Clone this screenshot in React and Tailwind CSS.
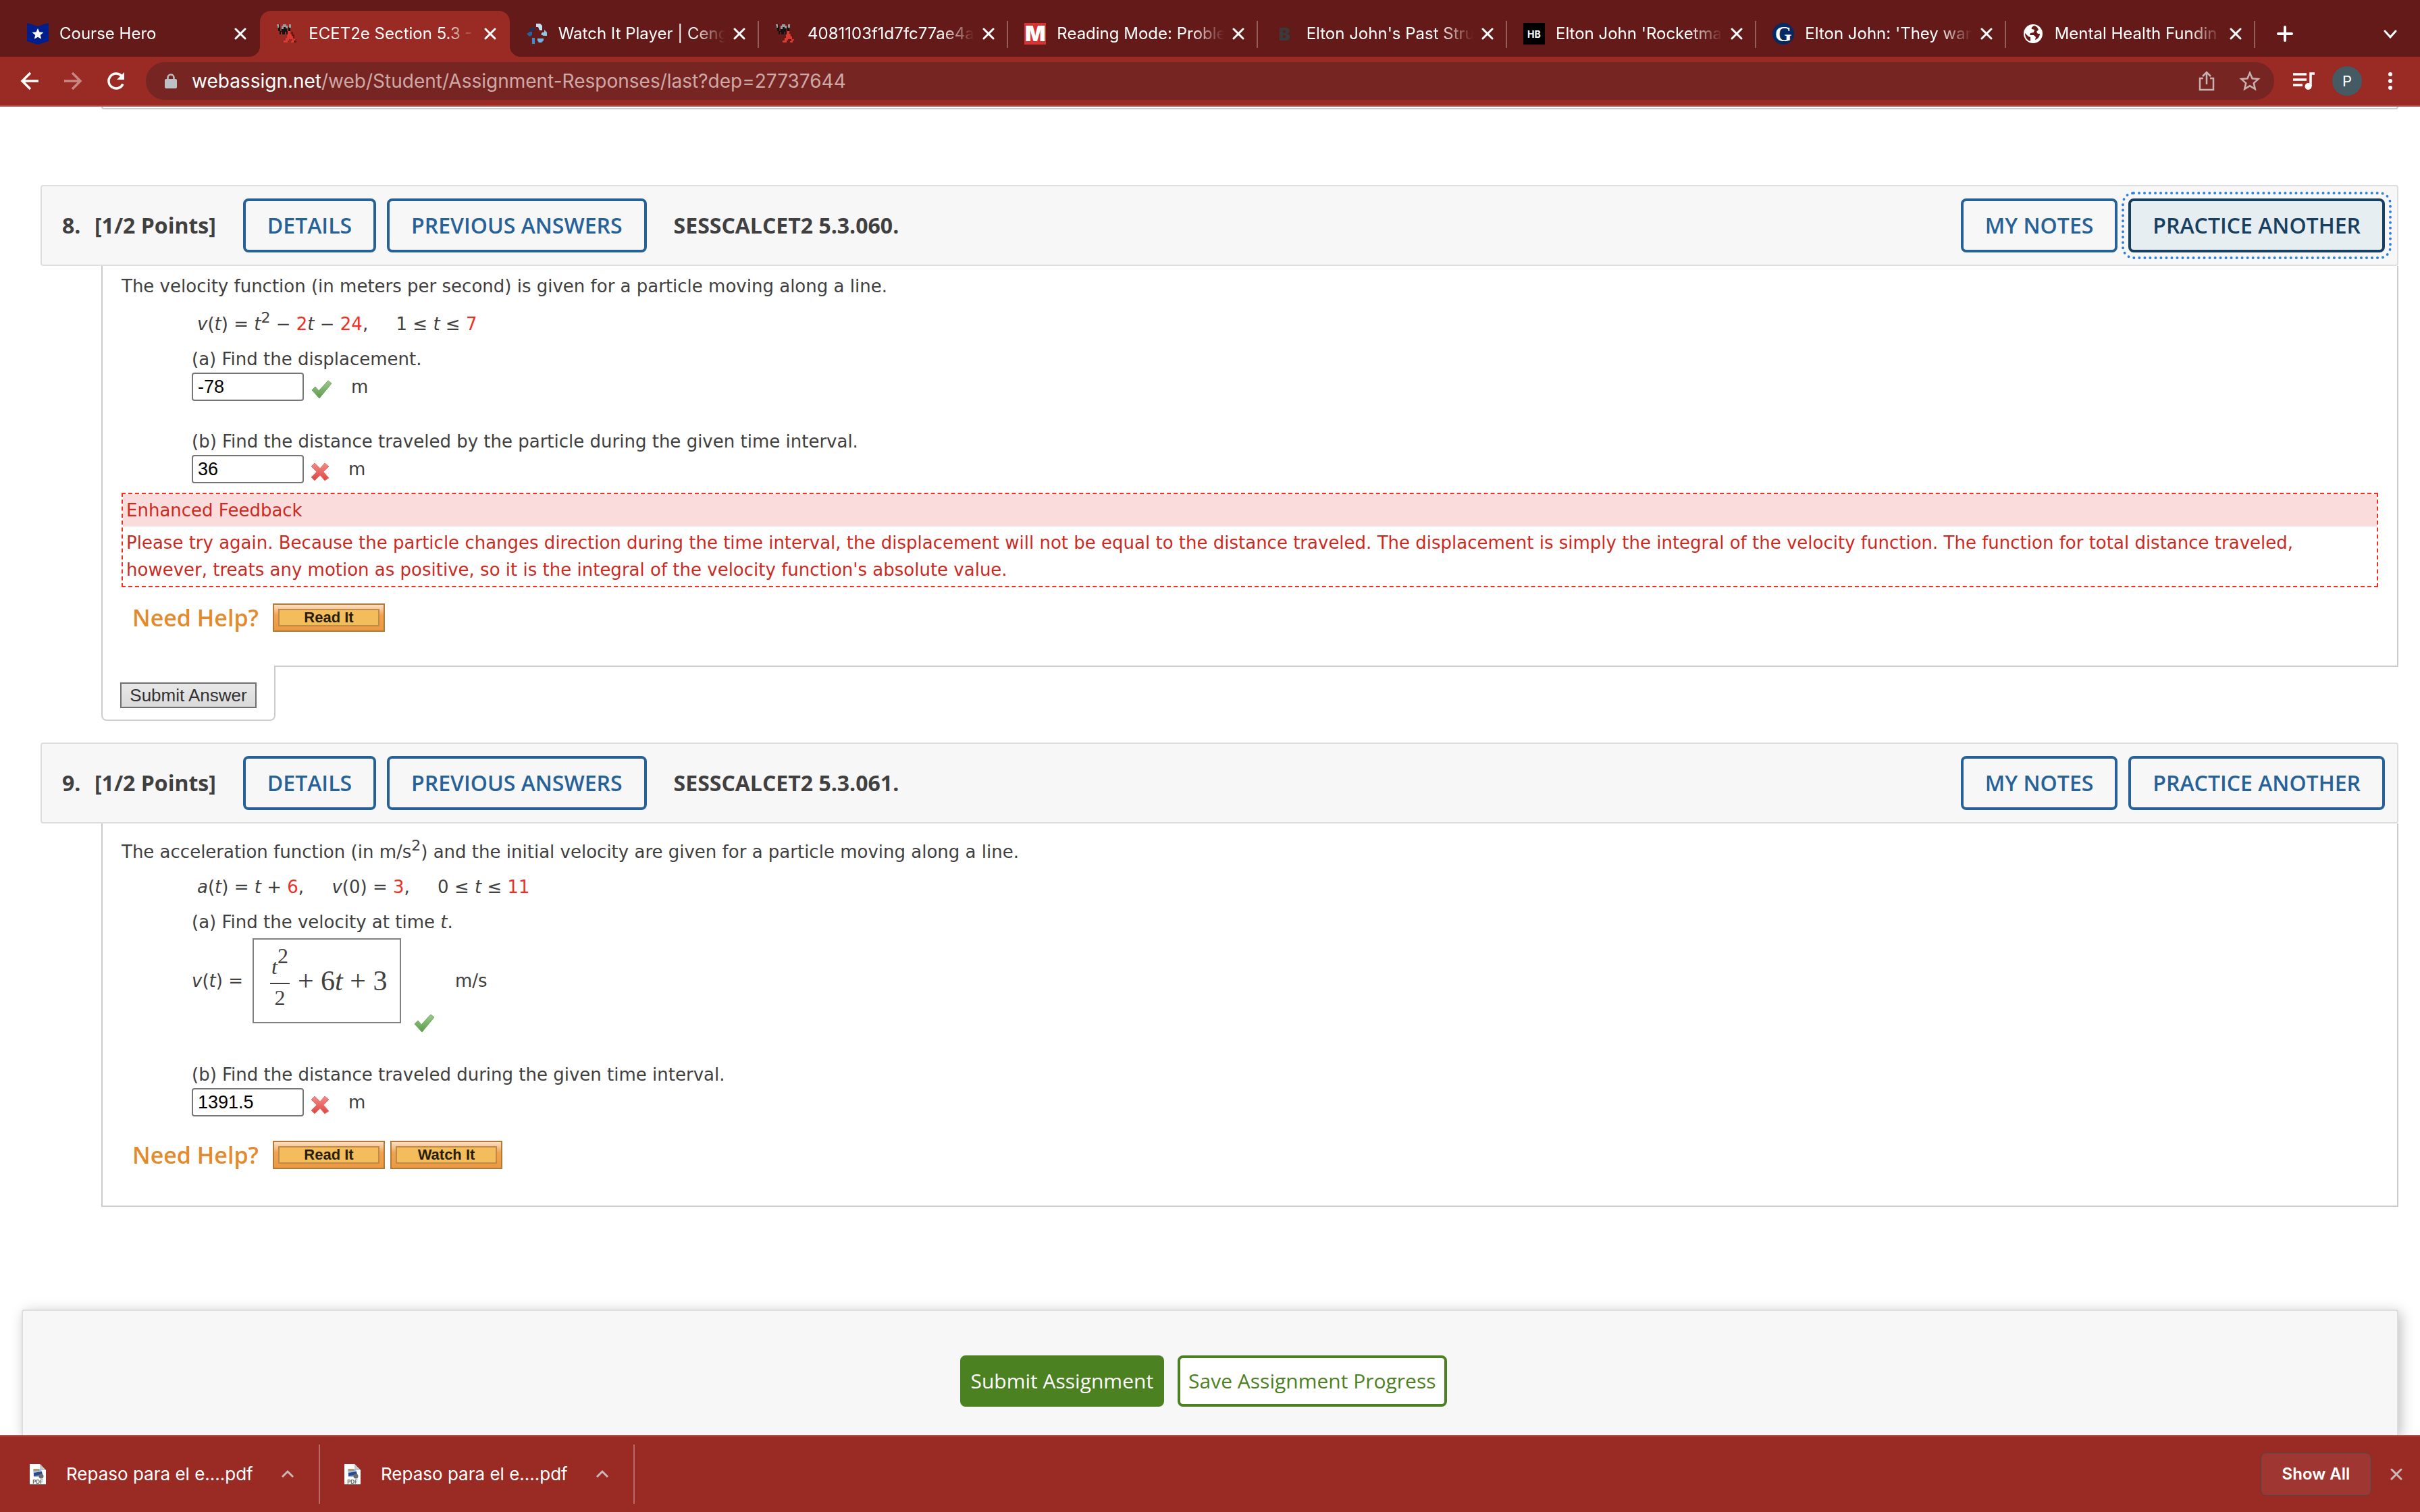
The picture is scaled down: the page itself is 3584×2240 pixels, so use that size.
import { useState } from 'react';

const CloseIcon = () => (
  <svg className="w-[18px] h-[18px]" viewBox="0 0 18 18" fill="none" stroke="currentColor" strokeWidth="3" strokeLinecap="round">
    <path d="M2 2l14 14M16 2L2 16" />
  </svg>
);

const CourseHeroIcon = () => (
  <svg className="w-8 h-8" viewBox="0 0 32 32">
    <path d="M0 0l16 5 16-5v27l-16 5-16-5z" fill="#001f8c" />
    <path d="M16 8l2.4 5.500 6 .5-4.600 4 1.400 5.800L16 20.700l-5.200 3.100 1.400-5.800-4.600-4 6-.5z" fill="#fff" />
  </svg>
);

const WebAssignIcon = () => (
  <svg className="w-8 h-8" viewBox="0 0 32 32">
    <path d="M2 2h3v4h1v6h2V8h2V2h4v6h2v4h2V6h1V2h3v5h-1v5h-2v5h-4v-4h-2v4H9v-4H7v4H5v-5H3V6H2z" fill="#141414" />
    <path d="M1 2h3v5H2V4H1zM10 2h5v2h2v4h-3V6h-3v3H8V4h2zM19 2h3v5h-3z" fill="#9a9a9a" />
    <path d="M17 12h4v4h2v4h2v4h3v2h2v3h-8v-2h2v-3h-5v2h-2v3h-6v-3h3v-4h2v-5h1z" fill="#d93a32" />
    <path d="M22 13h3v4h2v5h-2v-3h-2zM26 26h4v3h-4z" fill="#6e1512" />
  </svg>
);

const CengageIcon = () => (
  <svg className="w-8 h-8" viewBox="0 0 32 32">
    <path d="M15 1h6l3 3v7h-4l-2-5h-3z" fill="#c3e1f1" />
    <path d="M27 10l4 4v5h-5l-4-2 2-3h3z" fill="#8cc8e8" />
    <path d="M17 23h9v3l-3 3h-4l-2-3z" fill="#6ab4df" />
    <path d="M9 22h4v9H9z" fill="#3b8fce" />
    <path d="M1 16l5-3h3v5l-4 2z" fill="#2463a5" />
    <path d="M5 9l3-2h5v4H5z" fill="#0f3763" />
  </svg>
);

const MIcon = () => (
  <span className="w-8 h-8 flex items-center justify-center bg-[#d63431] text-[32px] leading-8 font-black text-white">M</span>
);

const BIcon = () => (
  <span className="w-8 h-8 flex items-center justify-center text-[26px] font-black text-[#3a3a3c]">B</span>
);

const HBIcon = () => (
  <span className="w-8 h-8 flex items-center justify-center bg-black text-[14px] font-bold text-white">HB</span>
);

const GIcon = () => (
  <span className="w-8 h-8 flex items-center justify-center rounded-full bg-[#052962] font-['Liberation_Serif',serif] text-[32px] leading-8 font-bold text-white">G</span>
);

const GlobeIcon = () => (
  <svg className="w-8 h-8" viewBox="0 0 32 32">
    <circle cx="16" cy="16" r="14" fill="#fff" />
    <path d="M18 4c-3 1-5 3-4 5l4 1-1 4-5 1-1 3h6l3 3-1 4c4-1 7-5 7-9h-3l-2-3 3-3c-1-3-3-5-6-6zM4 15l5 5 3 1v6C7 26 4 21 4 15z" fill="#641a18" />
  </svg>
);

const tabs = [
  { title: 'Course Hero', icon: <CourseHeroIcon /> },
  { title: 'ECET2e Section 5.3 -', icon: <WebAssignIcon />, active: true },
  { title: 'Watch It Player | Ceng', icon: <CengageIcon /> },
  { title: '4081103f1d7fc77ae4a', icon: <WebAssignIcon /> },
  { title: 'Reading Mode: Proble', icon: <MIcon /> },
  { title: "Elton John's Past Stru", icon: <BIcon /> },
  { title: "Elton John 'Rocketma", icon: <HBIcon /> },
  { title: "Elton John: 'They wan", icon: <GIcon /> },
  { title: 'Mental Health Fundin', icon: <GlobeIcon /> },
];

const Tab = ({ tab, divider }) => (
  <div className={`relative flex flex-1 min-w-0 items-center pl-6 pr-5 ${tab.active ? 'bg-[#992a24] rounded-t-2xl' : ''}`}>
    {tab.active && (
      <>
        <span className="absolute bottom-0 -left-4 w-4 h-4 bg-[radial-gradient(circle_at_0_0,transparent_16px,#992a24_16px)]" />
        <span className="absolute bottom-0 -right-4 w-4 h-4 bg-[radial-gradient(circle_at_100%_0,transparent_16px,#992a24_16px)]" />
      </>
    )}
    <span className="shrink-0">{tab.icon}</span>
    <span className="flex-1 min-w-0 ml-4 mr-3 overflow-hidden whitespace-nowrap text-[24px] leading-8 [mask-image:linear-gradient(to_right,black_80%,transparent)]">
      {tab.title}
    </span>
    <button aria-label={`Close ${tab.title}`} className="shrink-0"><CloseIcon /></button>
    {divider && <span className="absolute right-0 top-[15px] h-10 w-[2px] bg-[#935e5c]" />}
  </div>
);

const TabStrip = () => (
  <div className="flex h-[84px] pt-4 pl-4 bg-[#641a18] text-white">
    <div className="flex flex-1 min-w-0">
      {tabs.map((tab, i) => (
        <Tab key={tab.title} tab={tab} divider={i > 1} />
      ))}
    </div>
    <div className="flex w-[244px] items-center justify-between pl-8 pr-[34px]">
      <button aria-label="New tab">
        <svg className="w-6 h-6" viewBox="0 0 24 24" fill="none" stroke="currentColor" strokeWidth="4" strokeLinecap="round">
          <path d="M12 2v20M2 12h20" />
        </svg>
      </button>
      <button aria-label="Search tabs">
        <svg className="w-5 h-5" viewBox="0 0 20 20" fill="none" stroke="currentColor" strokeWidth="3" strokeLinecap="round">
          <path d="M2 6l8 9 8-9" />
        </svg>
      </button>
    </div>
  </div>
);

const Toolbar = () => (
  <div className="flex h-[74px] items-center border-b-2 border-[#b0504b] bg-[#992a24] pl-7 pr-7 text-white">
    <button aria-label="Back">
      <svg className="w-8 h-8" viewBox="0 0 32 32" fill="none" stroke="currentColor" strokeWidth="3.500">
        <path d="M29 16H5M17 4L5 16l12 12" />
      </svg>
    </button>
    <button aria-label="Forward" className="ml-8 text-[#c98884]">
      <svg className="w-8 h-8" viewBox="0 0 32 32" fill="none" stroke="currentColor" strokeWidth="3.500">
        <path d="M3 16h24M15 4l12 12-12 12" />
      </svg>
    </button>
    <button aria-label="Reload" className="ml-8">
      <svg className="w-8 h-8" viewBox="0 0 32 32" fill="none" stroke="currentColor" strokeWidth="3.500">
        <path d="M26 20.500A11 11 0 1 1 24 8.500" />
        <path d="M28 3v11H17z" fill="currentColor" stroke="none" />
      </svg>
    </button>
    <div className="flex flex-1 h-14 items-center ml-7 pl-7 pr-5 rounded-full bg-[#762523]">
      <svg className="w-[18px] h-[22px] text-[#bdc1c6]" viewBox="0 0 18 22">
        <rect x="0" y="8" width="18" height="14" rx="2" fill="currentColor" />
        <path d="M4.500 9V6a4.500 4.500 0 0 1 9 0v3" fill="none" stroke="currentColor" strokeWidth="2.500" />
      </svg>
      <span className="flex-1 ml-[22px] text-[28px] leading-8 text-[#cfa9a7]">
        <span className="text-white">webassign.net</span>/web/Student/Assignment-Responses/last?dep=27737644
      </span>
      <button aria-label="Share" className="text-[#c8b3b2]">
        <svg className="w-8 h-8" viewBox="0 0 32 32" fill="none" stroke="currentColor" strokeWidth="2.500">
          <path d="M11 12H6v17h20V12h-5M16 21V3M10 9l6-6 6 6" />
        </svg>
      </button>
      <button aria-label="Bookmark" className="ml-8 text-[#c8b3b2]">
        <svg className="w-8 h-8" viewBox="0 0 32 32" fill="none" stroke="currentColor" strokeWidth="2.500">
          <path d="M16 4l3.600 8.300 9 .8-6.800 6 2 8.800L16 23.200l-7.800 4.700 2-8.800-6.800-6 9-.8z" />
        </svg>
      </button>
    </div>
    <button aria-label="Media controls" className="ml-7">
      <svg className="w-8 h-8" viewBox="0 0 32 32" fill="none" stroke="currentColor" strokeWidth="3.500">
        <path d="M0 6h20M0 14h20M0 22h14M26 24V5h6" />
        <circle cx="22.500" cy="24" r="5" fill="currentColor" stroke="none" />
      </svg>
    </button>
    <button aria-label="Profile" className="ml-[26px] w-11 h-11 rounded-full bg-[#465a64] text-[22px] leading-8">P</button>
    <button aria-label="Menu" className="ml-[26px]">
      <svg className="w-8 h-8" viewBox="0 0 32 32" fill="currentColor">
        <circle cx="16" cy="6" r="3" />
        <circle cx="16" cy="16" r="3" />
        <circle cx="16" cy="26" r="3" />
      </svg>
    </button>
  </div>
);

const CheckMark = () => (
  <svg className="w-8 h-7" viewBox="0 0 32 28" role="img" aria-label="Correct">
    <defs>
      <linearGradient id="tick" x1="0" y1="0" x2="0" y2="1">
        <stop offset="0" stopColor="#9ccb8b" />
        <stop offset="1" stopColor="#5a9a4b" />
      </linearGradient>
    </defs>
    <path d="M2 15l5-5 5 6L26 1l5 4-18 22z" fill="url(#tick)" stroke="#6fa662" strokeWidth="1" strokeLinejoin="round" />
  </svg>
);

const CrossMark = () => (
  <svg className="w-7 h-7" viewBox="0 0 28 28" role="img" aria-label="Incorrect">
    <defs>
      <linearGradient id="cross" x1="0" y1="0" x2="0" y2="1">
        <stop offset="0" stopColor="#f08d8a" />
        <stop offset="1" stopColor="#e0443f" />
      </linearGradient>
    </defs>
    <path d="M6 1l8 8 7-8 6 5-8 8 8 9-6 4-7-8-8 8-5-5 8-8-8-8z" fill="url(#cross)" stroke="#e87a76" strokeWidth="1" strokeLinejoin="round" />
  </svg>
);

const HeaderButton = ({ children, focused }) => (
  <button
    className={
      focused
        ? 'h-20 px-8 rounded-lg border-4 border-[#173f5f] bg-[#e7eef2] text-[#173f5f] outline-4 outline-dotted outline-[#2f7fde] outline-offset-[6px]'
        : 'h-20 px-8 rounded-lg border-4 border-[#266297] text-[#266297]'
    }
  >
    {children}
  </button>
);

const QuestionHeader = ({ number, code, focused }) => (
  <div className="flex h-[120px] items-center gap-4 rounded border-2 border-[#dedede] bg-[#f7f7f7] pl-[30px] pr-[18px] font-['Open_Sans',sans-serif] text-[32px] leading-10 font-semibold">
    <h2 className="flex mr-6 font-bold">
      <span className="w-12">{number}.</span>
      <span>[1/2 Points]</span>
    </h2>
    <HeaderButton>DETAILS</HeaderButton>
    <HeaderButton>PREVIOUS ANSWERS</HeaderButton>
    <span className="flex-1 ml-6 font-bold">{code}</span>
    <HeaderButton>MY NOTES</HeaderButton>
    <HeaderButton focused={focused}>PRACTICE ANOTHER</HeaderButton>
  </div>
);

const AnswerRow = ({ id, label, value, correct }) => {
  const [answer, setAnswer] = useState(value);

  return (
    <div>
      <label htmlFor={id} className="block">{label}</label>
      <div className="flex h-[42px] items-center">
        <input
          id={id}
          value={answer}
          onChange={(e) => setAnswer(e.target.value)}
          className="w-[166px] h-[42px] px-[7px] rounded border-2 border-[#767676] bg-white font-['Liberation_Sans',sans-serif] text-[27px] text-black"
        />
        <span className="ml-[10px] mt-2">{correct ? <CheckMark /> : <CrossMark />}</span>
        <span className="ml-7">m</span>
      </div>
    </div>
  );
};

const HelpButton = ({ children }) => (
  <button className="w-[166px] h-[42px] p-[6px] border-2 border-[#b07a3a] bg-linear-to-b from-[#fbe0c4] via-[#f0a350] via-40% to-[#ec9a42]">
    <span className="flex h-full items-center justify-center border-2 border-[#c08a48] bg-[#f3bd5c] font-['Liberation_Sans',sans-serif] text-[22px] leading-6 font-bold text-[#2a1d08]">
      {children}
    </span>
  </button>
);

const NeedHelp = ({ items }) => (
  <div className="flex items-center gap-2 pl-4">
    <span className="w-[200px] font-['Open_Sans',sans-serif] text-[34px] leading-10 font-semibold text-[#e38b2c]">Need Help?</span>
    {items.map((item) => (
      <HelpButton key={item}>{item}</HelpButton>
    ))}
  </div>
);

const Red = ({ children }) => <span className="text-[#ee3124]">{children}</span>;

const QuestionEight = () => (
  <section>
    <QuestionHeader number={8} code="SESSCALCET2 5.3.060." focused />
    <div className="ml-[90px]">
      <div className="h-[592px] border-x-2 border-[#ccc] px-7 pt-[10px]">
        <p>The velocity function (in meters per second) is given for a particle moving along a line.</p>
        <p className="mt-4 pl-28">
          <i>v</i>(<i>t</i>) = <i>t</i><sup className="text-[22px]">2</sup> − <Red>2</Red><i>t</i> − <Red>24</Red>,&nbsp;&nbsp;&nbsp;&nbsp; 1 ≤ <i>t</i> ≤ <Red>7</Red>
        </p>
        <div className="flex flex-col gap-10 mt-3 pl-[104px]">
          <AnswerRow id="q8a" label="(a) Find the displacement." value="-78" correct />
          <AnswerRow id="q8b" label="(b) Find the distance traveled by the particle during the given time interval." value="36" />
        </div>
        <div className="mt-[14px] border-2 border-dashed border-[#ee3124] text-[#cc2a1f]">
          <h3 className="h-12 pl-[5px] pt-1 bg-[#fadcdc]">Enhanced Feedback</h3>
          <p className="pl-[5px] pt-1 pb-1">
            Please try again. Because the particle changes direction during the time interval, the displacement will not be equal to the distance traveled. The displacement is simply the integral of the velocity function. The function for total distance traveled, however, treats any motion as positive, so it is the integral of the velocity function's absolute value.
          </p>
        </div>
        <div className="mt-6">
          <NeedHelp items={['Read It']} />
        </div>
      </div>
      <div className="flex h-[82px]">
        <div className="w-[258px] pl-[26px] pt-6 border-x-2 border-b-2 border-[#ccc] rounded-b-lg">
          <button className="h-[38px] w-[202px] border-2 border-[#6f6f6f] bg-linear-to-b from-[#e8e8e8] to-[#dadada] font-['Liberation_Sans',sans-serif] text-[26px] leading-8 text-[#333]">
            Submit Answer
          </button>
        </div>
        <div className="flex-1 border-t-2 border-r-2 border-[#ccc] h-[2px] rounded-tr" />
      </div>
    </div>
  </section>
);

const QuestionNine = () => (
  <section className="mt-8">
    <QuestionHeader number={9} code="SESSCALCET2 5.3.061." />
    <div className="ml-[90px] h-[568px] border-x-2 border-b-2 border-[#ccc] px-7 pt-[22px]">
      <p>
        The acceleration function (in m/s<sup className="text-[22px]">2</sup>) and the initial velocity are given for a particle moving along a line.
      </p>
      <p className="mt-3 pl-28">
        <i>a</i>(<i>t</i>) = <i>t</i> + <Red>6</Red>,&nbsp;&nbsp;&nbsp;&nbsp; <i>v</i>(0) = <Red>3</Red>,&nbsp;&nbsp;&nbsp;&nbsp; 0 ≤ <i>t</i> ≤ <Red>11</Red>
      </p>
      <div className="mt-3 pl-[104px]">
        <p>(a) Find the velocity at time <i>t</i>.</p>
        <div className="flex items-center mt-1 h-[126px]">
          <span className="w-[90px] whitespace-nowrap"><i>v</i>(<i>t</i>) =</span>
          <div className="flex w-[220px] h-[126px] items-center gap-3 border-2 border-[#808080] pl-6 font-['Liberation_Serif',serif] text-[42px] leading-10 whitespace-nowrap">
            <span className="flex flex-col items-center text-[32px] leading-8">
              <span className="border-b-2 border-[#404040] px-[2px] pt-1 pb-2"><i>t</i><sup className="text-[32px]">2</sup></span>
              <span className="pt-1">2</span>
            </span>
            <span>+ 6<i>t</i> + 3</span>
          </div>
          <span className="self-end ml-[18px] -mb-[14px]"><CheckMark /></span>
          <span className="ml-[30px]">m/s</span>
        </div>
        <div className="mt-14">
          <AnswerRow id="q9b" label="(b) Find the distance traveled during the given time interval." value="1391.5" />
        </div>
      </div>
      <div className="mt-9">
        <NeedHelp items={['Read It', 'Watch It']} />
      </div>
    </div>
  </section>
);

const SubmitPanel = () => (
  <div className="flex flex-1 mt-[152px] ml-8 mr-8 items-start justify-center gap-5 rounded-t border-2 border-b-0 border-[#dedede] bg-[#f7f7f7] pt-[66px] pr-5 shadow-[4px_4px_20px_rgba(0,0,0,0.25)] font-['Open_Sans',sans-serif] text-[30px] leading-10">
    <button className="h-[76px] px-3 rounded-lg border-4 border-[#4c8122] bg-[#4c8122] text-white">Submit Assignment</button>
    <button className="h-[76px] px-3 rounded-lg border-4 border-[#4c8122] bg-white text-[#4c8122]">Save Assignment Progress</button>
  </div>
);

const PdfIcon = () => (
  <svg className="w-6 h-8" viewBox="0 0 24 32">
    <path d="M0 1h15l9 9v21H0z" fill="#fff" />
    <path d="M15 1v9h9z" fill="#c9c9c9" />
    <path d="M5 8h12l2 12H6z" fill="#9fc0e8" />
    <path d="M6 14l12-2 1 5-13 2z" fill="#2d4a86" />
    <path d="M6 8h8v3H6z" fill="#b59a62" />
    <circle cx="17" cy="19" r="3.500" fill="#6b6b6b" />
    <text x="12" y="29.500" textAnchor="middle" fontSize="8" fontFamily="Inter" fontWeight="600" fill="#555">PDF</text>
  </svg>
);

const Download = ({ name }) => (
  <div className="flex h-[88px] w-[466px] items-center border-r-2 border-[#b96a66] pl-9 pr-9">
    <PdfIcon />
    <span className="flex-1 ml-[30px] text-[26px] leading-8">{name}</span>
    <button aria-label="Download options" className="text-[#c9b8b7]">
      <svg className="w-5 h-5" viewBox="0 0 20 20" fill="none" stroke="currentColor" strokeWidth="3">
        <path d="M2 14l8-8 8 8" />
      </svg>
    </button>
  </div>
);

const DownloadBar = () => (
  <footer className="flex h-[114px] shrink-0 items-center border-t-2 border-[#b0504b] bg-[#992a24] pl-2 pr-[26px] text-white">
    <Download name="Repaso para el e....pdf" />
    <Download name="Repaso para el e....pdf" />
    <button className="ml-auto h-16 w-[164px] rounded-lg border border-[#464a4e] bg-[#9f3631] text-[24px] leading-8 font-semibold">Show All</button>
    <button aria-label="Close downloads" className="ml-7 text-[#c9b8b7]"><CloseIcon /></button>
  </footer>
);

export default function App() {
  return (
    <div className="flex flex-col h-screen overflow-hidden bg-white font-[Inter,sans-serif]">
      <header className="shrink-0">
        <TabStrip />
        <Toolbar />
      </header>
      <main className="flex flex-1 flex-col min-h-0 overflow-hidden font-['DejaVu_Sans',Verdana,sans-serif] text-[26px] leading-10 text-[#404040]">
        <div className="ml-[150px] mr-8 h-1 shrink-0 border-x-2 border-b-2 border-[#ccc] rounded-b" />
        <div className="mt-28 ml-[60px] mr-8">
          <QuestionEight />
          <QuestionNine />
        </div>
        <SubmitPanel />
      </main>
      <DownloadBar />
    </div>
  );
}
